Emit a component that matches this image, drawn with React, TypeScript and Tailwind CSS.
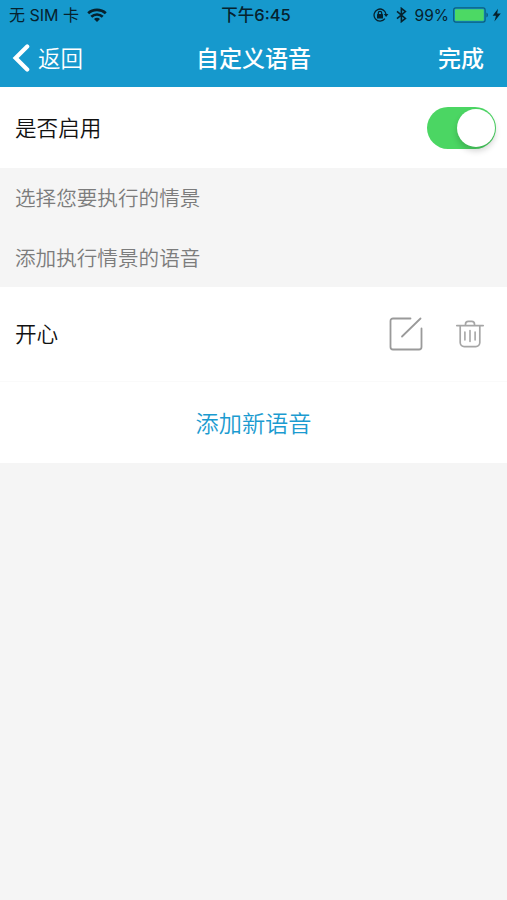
import { useState } from "react";

function WifiIcon() {
  return (
    <svg width="20" height="14" viewBox="0 0 20 14" fill="none" stroke="#06222e" strokeWidth="2.7">
      <path d="M1.2 5.2C6 0.7 14 0.7 18.8 5.2" />
      <path d="M4.3 8.8C7.6 5.7 12.4 5.7 15.7 8.8" />
      <path d="M7 11C8.8 9.4 11.2 9.4 13 11L10 14Z" fill="#06222e" stroke="none" />
    </svg>
  );
}

function RotationLockIcon() {
  return (
    <svg width="16" height="14" viewBox="0 0 16 14" fill="none" stroke="#06222e" strokeWidth="1.3">
      <path d="M11.9 10.6A6 6 0 1 1 13 6.2" />
      <path d="M10.8 6L15.4 6L13.1 9Z" fill="#06222e" stroke="none" />
      <rect x="4" y="6" width="6" height="4.6" rx="0.6" fill="#06222e" stroke="none" />
      <path d="M5.3 6.4V5A1.7 1.7 0 0 1 8.7 5V6.4" />
    </svg>
  );
}

function BluetoothIcon() {
  return (
    <svg width="11" height="16" viewBox="0 0 11 16" fill="none" stroke="#06222e" strokeWidth="1.6">
      <path d="M1 4.4L9.4 11.4L5.4 14.6V1.4L9.4 4.6L1 11.6" />
    </svg>
  );
}

function BatteryIcon() {
  return (
    <svg width="49" height="16" viewBox="0 0 49 16" fill="none">
      <rect x="0.7" y="0.9" width="31.4" height="14.2" rx="2" stroke="#0c5e7e" strokeWidth="1.2" />
      <rect x="2" y="2.2" width="28.8" height="11.6" rx="0.8" fill="#4cd964" />
      <path d="M33.4 5.6A2.6 2.6 0 0 1 33.4 10.4Z" fill="#0c5e7e" />
      <path d="M45 1.8L39.6 8.8H43L41.4 14.4L47.8 6.6H44.2Z" fill="#06222e" />
    </svg>
  );
}

function EditIcon() {
  return (
    <svg width="36" height="36" viewBox="0 0 36 36" fill="none" stroke="#9a9a9a" strokeWidth="1.8" strokeLinecap="round">
      <path d="M22.5 2.5H5A2.5 2.5 0 0 0 2.5 5V31A2.5 2.5 0 0 0 5 33.5H31A2.5 2.5 0 0 0 33.5 31V12.5" />
      <path d="M14 20.5L32.5 2.5" />
    </svg>
  );
}

function TrashIcon() {
  return (
    <svg width="30" height="30" viewBox="0 0 30 30" fill="none" stroke="#a6a6a6" strokeWidth="1.7" strokeLinecap="round">
      <path d="M1.8 6.6H28.2" />
      <path d="M10.5 6.2V5.2A2.8 2.8 0 0 1 13.3 2.4H16.7A2.8 2.8 0 0 1 19.5 5.2V6.2" />
      <path d="M5.2 7V23.6A4 4 0 0 0 9.2 27.6H20.8A4 4 0 0 0 24.8 23.6V7" />
      <path d="M9.9 13V21M15 11.6V22.4M20.1 13V21" strokeWidth="1.6" />
    </svg>
  );
}

function StatusBar() {
  return (
    <div className="grid h-[30px] grid-cols-3 items-center pl-[9px] pr-[5px] text-[16px] leading-none text-[#06222e]">
      <div className="flex items-center whitespace-nowrap">
        <span>无 SIM 卡</span>
        <span className="ml-2">
          <WifiIcon />
        </span>
      </div>
      <div className="pl-px text-center text-[16.5px] font-medium">下午6:45</div>
      <div className="flex items-center justify-end">
        <RotationLockIcon />
        <span className="ml-[7px]">
          <BluetoothIcon />
        </span>
        <span className="ml-[8px] mr-[4px] pt-px text-[15.5px]">99%</span>
        <BatteryIcon />
      </div>
    </div>
  );
}

export default function App() {
  const [enabled, setEnabled] = useState(true);
  const voices = ["开心"];

  return (
    <div className="flex h-[900px] w-[507px] flex-col overflow-hidden bg-[#f5f5f5] font-['Inter','Noto_Sans_CJK_SC',sans-serif]">
      <header className="h-[87px] bg-[#1699cd]">
        <StatusBar />
        <div className="grid h-[57px] grid-cols-[1fr_auto_1fr] items-center px-[23px] text-[23px] text-white">
          <button className="-ml-[11px] flex items-center text-[22.5px] font-[350]">
            <svg
              className="-mt-px"
              width="18"
              height="30"
              viewBox="0 0 18 30"
              fill="none"
              stroke="white"
              strokeWidth="4.2"
              strokeLinecap="round"
            >
              <path d="M15.2 3.4L3.6 15L15.2 26.6" />
            </svg>
            <span className="ml-2 pt-px">返回</span>
          </button>
          <h1 className="pt-px font-medium">自定义语音</h1>
          <button className="pt-px text-right font-medium">完成</button>
        </div>
      </header>

      <div className="flex h-[81px] items-center justify-between bg-white pl-[15px] pr-[11px]">
        <span className="pt-0.5 text-[21.6px] font-[350] text-[#111]">是否启用</span>
        <button
          role="switch"
          aria-checked={enabled}
          onClick={() => setEnabled(!enabled)}
          className={`flex h-[42px] w-[69px] items-center rounded-full px-[1.5px] ${
            enabled ? "justify-end bg-[#4bd663]" : "justify-start bg-gray-300"
          }`}
        >
          <span className="h-[38px] w-[38px] rounded-full bg-white shadow-[0_4px_6px_rgba(0,0,0,0.18)]" />
        </button>
      </div>

      <div className="h-[119px] text-[20.6px] font-[350] text-[#7c7c7c]">
        <p className="flex h-[60px] items-center px-[15px] pt-[3px]">选择您要执行的情景</p>
        <p className="flex h-[59px] items-center px-[15px] pt-[3px]">添加执行情景的语音</p>
      </div>

      {voices.map((voice) => (
        <div
          key={voice}
          className="flex h-[95px] items-center border-b border-[#fafafa] bg-white pl-[15px] pr-[22px]"
        >
          <span className="flex-1 text-[21.6px] font-[350] text-[#111]">{voice}</span>
          <button>
            <EditIcon />
          </button>
          <button className="ml-[31px]">
            <TrashIcon />
          </button>
        </div>
      ))}

      <button className="h-[81px] bg-white pt-[3px] text-[23.2px] font-[350] text-[#1b9bd0]">添加新语音</button>
    </div>
  );
}
